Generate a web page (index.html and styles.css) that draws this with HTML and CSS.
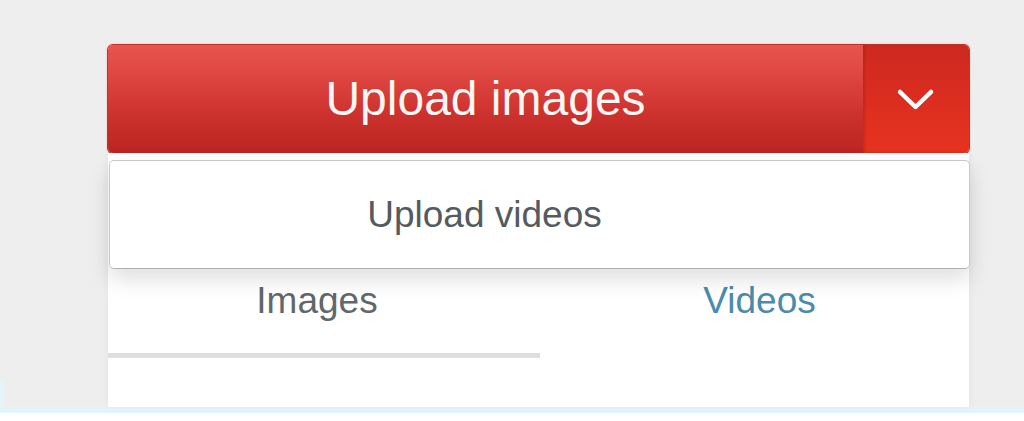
FILE: index.html
```html
<!DOCTYPE html>
<html lang="en">
<head>
<meta charset="utf-8">
<title>Upload</title>
<link rel="stylesheet" href="styles.css">
</head>
<body>
<div class="page">
  <div class="uploader">
    <div class="btn-group">
      <button class="btn-main" type="button">Upload images</button>
      <button class="btn-caret" type="button" aria-label="More upload options">
        <svg width="40" height="28" viewBox="0 0 40 28" aria-hidden="true">
          <path d="M4 6 L19.5 21 L35 6" fill="none" stroke="#fff" stroke-width="4.5" stroke-linecap="round" stroke-linejoin="round"/>
        </svg>
      </button>
    </div>
    <div class="panel">
      <ul class="menu">
        <li class="menu-item">Upload videos</li>
      </ul>
      <div class="tabs">
        <div class="tab tab-active">Images</div>
        <div class="tab tab-link">Videos</div>
      </div>
    </div>
  </div>
</div>
<div class="below"></div>
</body>
</html>
```

FILE: styles.css
```css
html, body {
  margin: 0;
  padding: 0;
}

body {
  background: #fff;
  font-family: "Liberation Sans", Arial, sans-serif;
  overflow: hidden;
}

.page {
  position: relative;
  box-sizing: content-box;
  height: 362px;
  padding: 45px 0 0 108px;
  background: #eeeeee;
  border-bottom: 6px solid #e3f4fb;
}

/* thin light-blue edge on the lower left of the frame */
.page::before {
  content: "";
  position: absolute;
  left: 0;
  bottom: 0;
  width: 4px;
  height: 27px;
  background: #e3f4fb;
  border-bottom-left-radius: 4px;
}

.uploader {
  width: 861px;
}

.btn-group {
  display: flex;
  height: 108px;
  border-radius: 5px;
  overflow: hidden;
  box-shadow: 0 0 0 1px #c8302b, 0 0 2px 1px rgba(230, 90, 80, 0.35);
}

.btn-group button {
  border: 0;
  margin: 0;
  padding: 0;
  cursor: pointer;
  font-family: inherit;
}

.btn-main {
  flex: 1;
  display: flex;
  align-items: center;
  justify-content: center;
  background: linear-gradient(to bottom, #e9544f 0%, #de4541 30%, #cc312d 65%, #bb2521 100%);
  color: #fff6f4;
  font-size: 48px;
  line-height: 1;
  text-shadow: 0 0 1px rgba(120, 0, 0, 0.25);
}

.btn-caret {
  width: 106px;
  display: flex;
  align-items: center;
  justify-content: center;
  background: linear-gradient(to bottom, #cd291f 0%, #db2d20 50%, #e7331f 100%);
  box-shadow: inset 2px 0 2px rgba(140, 20, 10, 0.25);
}

.btn-caret svg {
  display: block;
  margin-top: 2px;
}

.panel {
  position: relative;
  height: 254px;
  background: #fff;
  box-shadow: 0 0 8px rgba(0, 0, 0, 0.05);
}

.menu {
  position: absolute;
  top: 7px;
  left: 1px;
  right: -1px;
  height: 109px;
  margin: 0;
  padding: 0;
  list-style: none;
  box-sizing: border-box;
  background: #fff;
  border: 1px solid #c9c9c9;
  border-bottom-color: #b0b0b0;
  border-radius: 5px;
  box-shadow: 0 10px 22px rgba(0, 0, 0, 0.13);
  display: flex;
  z-index: 2;
}

.menu-item {
  flex: 1;
  display: flex;
  align-items: center;
  justify-content: center;
  padding-right: 110px;
  color: #555a5e;
  font-size: 37px;
  line-height: 1;
}

.tabs {
  display: grid;
  grid-template-columns: 432px 1fr;
  padding-top: 128px;
}

.tab {
  height: 40px;
  line-height: 40px;
  padding-bottom: 32px;
  text-align: center;
  font-size: 37px;
}

.tab-active {
  color: #62676c;
  border-bottom: 5px solid #dedede;
  padding-right: 14px;
}

.tab-link {
  color: #4b8bab;
  padding-left: 10px;
}

.below {
  height: 8px;
  background: #fff;
}
```
